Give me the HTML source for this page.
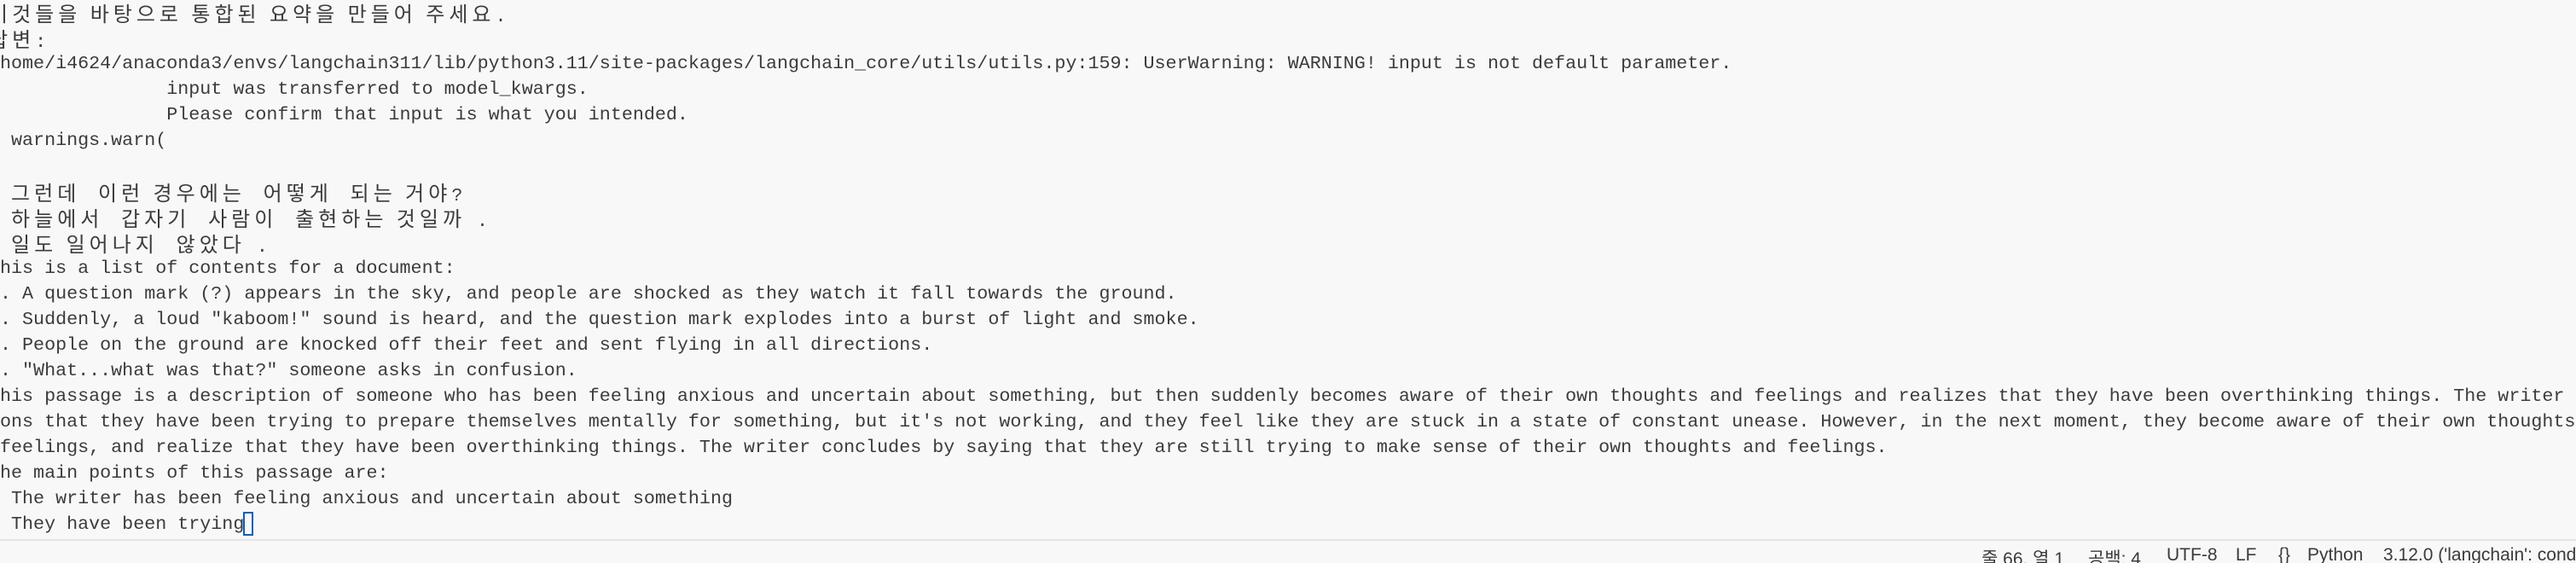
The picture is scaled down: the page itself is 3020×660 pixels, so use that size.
<!DOCTYPE html>
<html><head><meta charset="utf-8">
<style>
html,body{margin:0;padding:0;}
body{width:3020px;height:658px;background:#f8f8f8;overflow:hidden;position:relative;}
#ed{position:absolute;left:-13px;top:0;width:3040px;height:632px;overflow:hidden;font-family:"Liberation Mono","Noto Sans CJK KR",monospace;font-size:21.7px;color:#3b3b3b;}
.l{height:30px;line-height:30px;white-space:pre;}
.k{font-family:"Noto Sans CJK KR","Liberation Mono",monospace;letter-spacing:5px;font-size:24px;}
#cur{display:inline-block;border:2px solid #0a5fb8;vertical-align:middle;margin-left:-1px;box-sizing:border-box;width:12px;height:28px;}
#sb{position:absolute;left:0;top:632px;width:3020px;height:26px;border-top:2px solid #e4e4e4;background:#f8f8f8;font-family:"Liberation Sans","Noto Sans CJK KR",sans-serif;font-size:21px;color:#3b3b3b;overflow:hidden;}
#sb span{position:absolute;top:5px;white-space:pre;}
</style></head><body>
<div id="ed">
<div class="l"><span class="k">이것들을 바탕으로 통합된 요약을 만들어 주세요</span>.</div>
<div class="l"><span class="k">답변</span>:</div>
<div class="l">/home/i4624/anaconda3/envs/langchain311/lib/python3.11/site-packages/langchain_core/utils/utils.py:159: UserWarning: WARNING! input is not default parameter.</div>
<div class="l">                input was transferred to model_kwargs.</div>
<div class="l">                Please confirm that input is what you intended.</div>
<div class="l">  warnings.warn(</div>
<div class="l"> </div>
<div class="l">  <span class="k">그런데  이런 경우에는  어떻게  되는 거야</span>?</div>
<div class="l">  <span class="k">하늘에서  갑자기  사람이  출현하는 것일까</span> .</div>
<div class="l">  <span class="k">일도 일어나지  않았다</span> .</div>
<div class="l">This is a list of contents for a document:</div>
<div class="l">1. A question mark (?) appears in the sky, and people are shocked as they watch it fall towards the ground.</div>
<div class="l">2. Suddenly, a loud "kaboom!" sound is heard, and the question mark explodes into a burst of light and smoke.</div>
<div class="l">3. People on the ground are knocked off their feet and sent flying in all directions.</div>
<div class="l">4. "What...what was that?" someone asks in confusion.</div>
<div class="l">This passage is a description of someone who has been feeling anxious and uncertain about something, but then suddenly becomes aware of their own thoughts and feelings and realizes that they have been overthinking things. The writer mentions</div>
<div class="l">ions that they have been trying to prepare themselves mentally for something, but it's not working, and they feel like they are stuck in a state of constant unease. However, in the next moment, they become aware of their own thoughts and</div>
<div class="l"> feelings, and realize that they have been overthinking things. The writer concludes by saying that they are still trying to make sense of their own thoughts and feelings.</div>
<div class="l">The main points of this passage are:</div>
<div class="l">- The writer has been feeling anxious and uncertain about something</div>
<div class="l">- They have been trying<span id="cur"></span></div>
</div>
<div id="sb">
<span style="left:2323px">줄 66, 열 1</span>
<span style="left:2448px">공백: 4</span>
<span style="left:2540px">UTF-8</span>
<span style="left:2621px">LF</span>
<span style="left:2671px">{}</span>
<span style="left:2705px">Python</span>
<span style="left:2794px">3.12.0 ('langchain': conda)</span>
</div>
</body></html>
